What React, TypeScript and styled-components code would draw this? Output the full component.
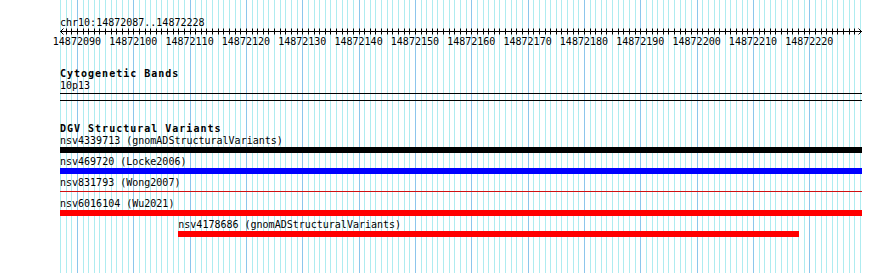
import React from 'react';
import styled, { createGlobalStyle } from 'styled-components';

// region shown in the view
const START = 14872087;
const END = 14872228;
const TRACK_WIDTH = 802;
const BP = 800 / (END - START + 1);

const toX = (bp: number) => (bp - START) * BP;

interface Feature {
  name: string;
  source: string;
  start: number;
  end: number;
  color: string;
  thin?: boolean;
}

const features: Feature[] = [
  { name: 'nsv4339713', source: 'gnomADStructuralVariants', start: START, end: END + 1.3, color: '#000000' },
  { name: 'nsv469720', source: 'Locke2006', start: START, end: END + 1.3, color: '#0000ff' },
  { name: 'nsv831793', source: 'Wong2007', start: START, end: END + 1.3, color: '#d01010', thin: true },
  { name: 'nsv6016104', source: 'Wu2021', start: START, end: END + 1.3, color: '#ff0000' },
  { name: 'nsv4178686', source: 'gnomADStructuralVariants', start: 14872108, end: 14872218.2, color: '#ff0000' },
];

const GlobalStyle = createGlobalStyle`
  html, body {
    margin: 0;
    padding: 0;
    background: #ffffff;
  }
`;

const Page = styled.div`
  position: relative;
  height: 273px;
  overflow: hidden;
  padding-left: 60px;
  font-family: 'DejaVu Sans Mono', 'Liberation Mono', monospace;
  font-size: 10px;
  color: #000000;
`;

const GridLayer = styled.svg`
  position: absolute;
  top: 0;
  left: 60px;
  z-index: 0;
`;

const Content = styled.div`
  position: relative;
  z-index: 1;
  width: ${TRACK_WIDTH}px;
`;

// text rows sit a pixel lower than their 12px box, like the bitmap font of the original
const TextLine = styled.div`
  height: 12px;
  line-height: 14px;
  white-space: nowrap;
`;

const LocationLabel = styled(TextLine)`
  margin-top: 16px;
`;

const RulerSvg = styled.svg`
  display: block;
  overflow: visible;
`;

const Section = styled.section`
  margin-top: 21px;
`;

const TrackTitle = styled(TextLine)`
  font-weight: bold;
  letter-spacing: 1px;
`;

const BandBox = styled.div`
  margin-top: 2px;
  height: 6px;
  border-top: 1px solid #000000;
  border-bottom: 1px solid #000000;
`;

const FeatureRow = styled.div`
  height: 21px;
`;

const FeatureBlock = styled.div`
  display: flex;
  flex-direction: column;
`;

const Bar = styled.div<{ $color: string; $thin?: boolean }>`
  margin-top: ${(p) => (p.$thin ? '3px' : '1px')};
  height: ${(p) => (p.$thin ? '1px' : '6px')};
  background: ${(p) => p.$color};
`;

const Grid = () => {
  const lines = [];
  for (let i = 0; i <= END - START + 1; i++) {
    const x = Math.round(i * BP) + 0.5;
    const major = (START + i) % 10 === 0;
    lines.push(
      <line key={i} x1={x} x2={x} y1={0} y2={273} stroke={major ? '#8cc6ec' : '#aeecf0'} strokeWidth={1} />
    );
  }
  return (
    <GridLayer width={TRACK_WIDTH} height={273}>
      {lines}
    </GridLayer>
  );
};

const Ruler = () => {
  const ticks = [];
  const labels = [];
  for (let i = 1; i <= END - START; i++) {
    const x = Math.round(i * BP) + 0.5;
    ticks.push(<line key={i} x1={x} x2={x} y1={0.5} y2={6.5} stroke="#000" strokeWidth={1} />);
    if ((START + i) % 10 === 0) {
      labels.push(
        <text
          key={i}
          x={toX(START + i)}
          y={16.5}
          textAnchor="middle"
          fontSize={10}
          fontFamily="'DejaVu Sans Mono', monospace"
          fill="#000"
        >
          {START + i}
        </text>
      );
    }
  }
  return (
    <RulerSvg width={TRACK_WIDTH} height={18}>
      <line x1={0} x2={TRACK_WIDTH} y1={3.5} y2={3.5} stroke="#000" strokeWidth={1} />
      <polyline points="3.5,0.5 0.5,3.5 3.5,6.5" fill="none" stroke="#000" strokeWidth={1} />
      <polyline points={`${TRACK_WIDTH - 3.5},0.5 ${TRACK_WIDTH - 0.5},3.5 ${TRACK_WIDTH - 3.5},6.5`} fill="none" stroke="#000" strokeWidth={1} />
      {ticks}
      {labels}
    </RulerSvg>
  );
};

const App = () => {
  return (
    <Page>
      <GlobalStyle />
      <Grid />
      <Content>
        <LocationLabel>
          chr10:{START}..{END}
        </LocationLabel>
        <Ruler />

        <Section>
          <TrackTitle>Cytogenetic Bands</TrackTitle>
          <TextLine>10p13</TextLine>
          <BandBox />
        </Section>

        <Section>
          <TrackTitle>DGV Structural Variants</TrackTitle>
          {features.map((f) => {
            const left = toX(f.start);
            const width = Math.min(toX(f.end), TRACK_WIDTH) - left;
            return (
              <FeatureRow key={f.name}>
                <FeatureBlock style={{ marginLeft: left, width }}>
                  <TextLine>
                    {f.name} ({f.source})
                  </TextLine>
                  <Bar $color={f.color} $thin={f.thin} />
                </FeatureBlock>
              </FeatureRow>
            );
          })}
        </Section>
      </Content>
    </Page>
  );
};

export default App;
